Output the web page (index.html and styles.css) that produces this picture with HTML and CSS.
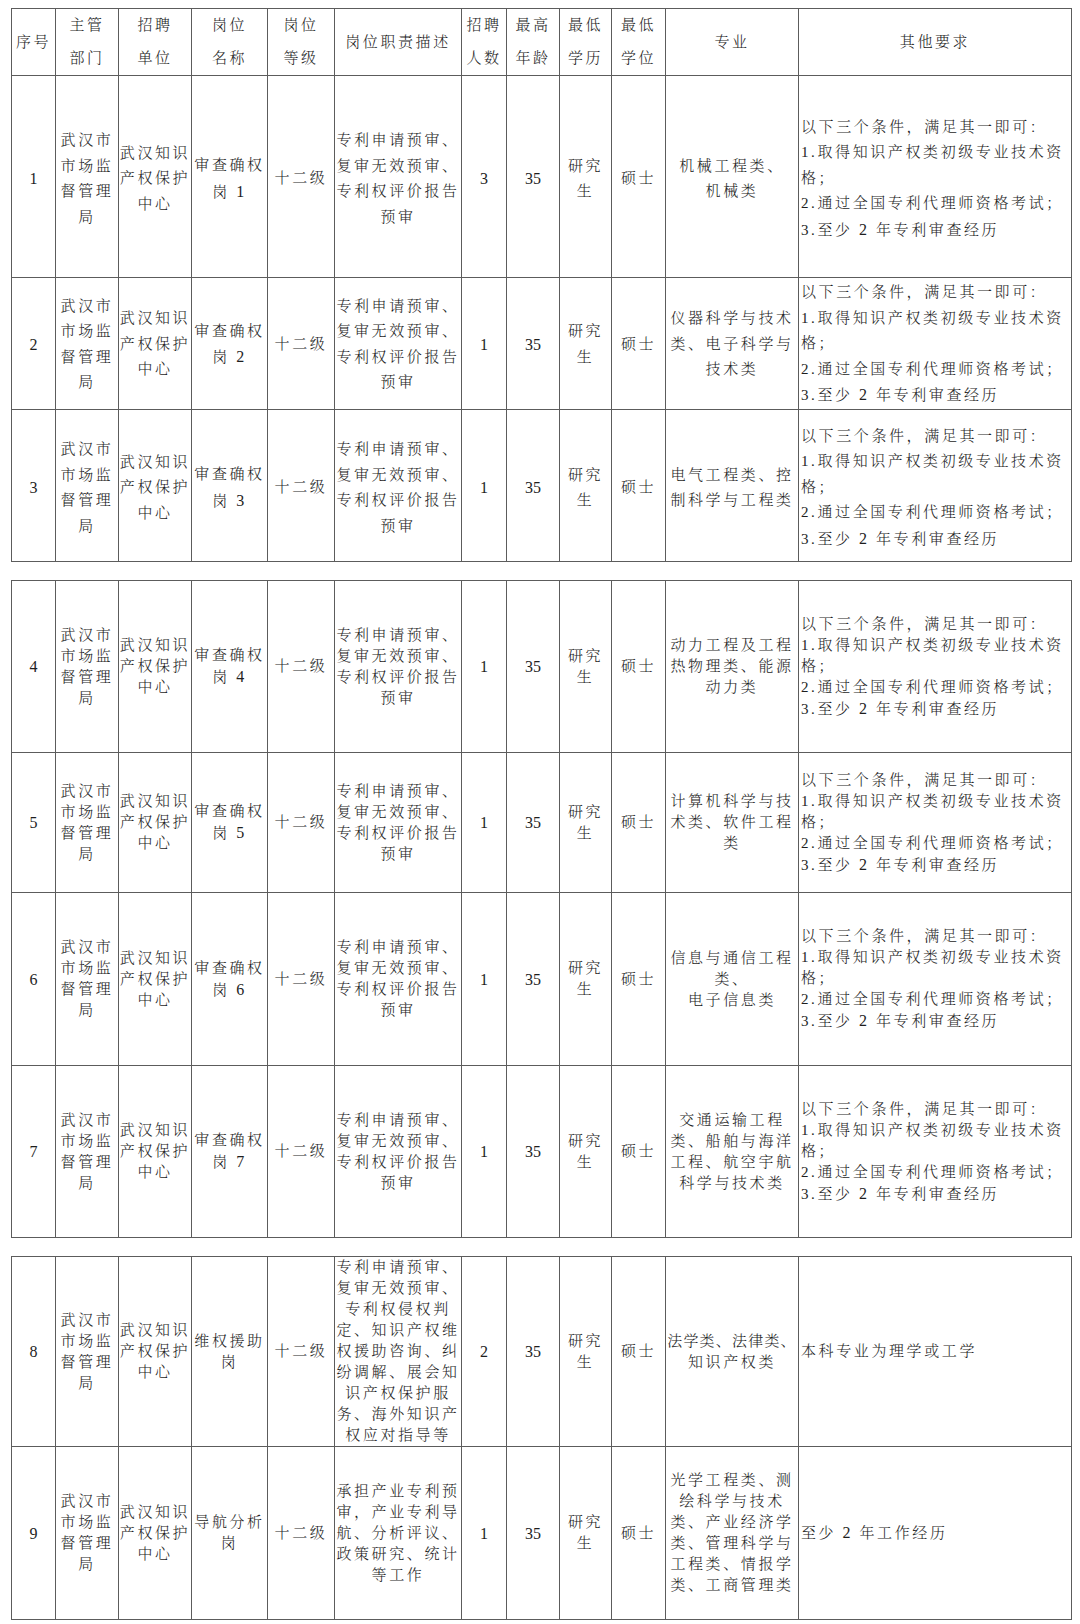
FILE: index.html
```html
<!DOCTYPE html>
<html lang="zh-CN">
<head>
<meta charset="utf-8">
<title>招聘岗位表</title>
<link rel="stylesheet" href="styles.css">
</head>
<body>
<div class="page">
<table class="grid t1">
<colgroup><col class="c1"><col class="c2"><col class="c3"><col class="c4"><col class="c5"><col class="c6"><col class="c7"><col class="c8"><col class="c9"><col class="c10"><col class="c11"><col class="c12"></colgroup>
<thead>
<tr class="hd">
<th>序号</th><th>主管<br>部门</th><th>招聘<br>单位</th><th>岗位<br>名称</th><th>岗位<br>等级</th><th>岗位职责描述</th><th>招聘<br>人数</th><th>最高<br>年龄</th><th>最低<br>学历</th><th>最低<br>学位</th><th>专业</th><th>其他要求</th>
</tr>
</thead>
<tbody>
<tr class="r1">
<td class="num">1</td><td>武汉市<br>市场监<br>督管理<br>局</td><td>武汉知识<br>产权保护<br>中心</td><td>审查确权<br>岗 <span class="d">1</span></td><td>十二级</td><td>专利申请预审、<br>复审无效预审、<br>专利权评价报告<br>预审</td><td class="num">3</td><td class="num">35</td><td>研究<br>生</td><td>硕士</td><td>机械工程类、<br>机械类</td><td class="other">以下三个条件，满足其一即可：<br>1.取得知识产权类初级专业技术资<br>格；<br>2.通过全国专利代理师资格考试；<br>3.至少 <span class="d">2</span> 年专利审查经历</td>
</tr>
<tr class="r2">
<td class="num">2</td><td>武汉市<br>市场监<br>督管理<br>局</td><td>武汉知识<br>产权保护<br>中心</td><td>审查确权<br>岗 <span class="d">2</span></td><td>十二级</td><td>专利申请预审、<br>复审无效预审、<br>专利权评价报告<br>预审</td><td class="num">1</td><td class="num">35</td><td>研究<br>生</td><td>硕士</td><td>仪器科学与技术<br>类、电子科学与<br>技术类</td><td class="other">以下三个条件，满足其一即可：<br>1.取得知识产权类初级专业技术资<br>格；<br>2.通过全国专利代理师资格考试；<br>3.至少 <span class="d">2</span> 年专利审查经历</td>
</tr>
<tr class="r3">
<td class="num">3</td><td>武汉市<br>市场监<br>督管理<br>局</td><td>武汉知识<br>产权保护<br>中心</td><td>审查确权<br>岗 <span class="d">3</span></td><td>十二级</td><td>专利申请预审、<br>复审无效预审、<br>专利权评价报告<br>预审</td><td class="num">1</td><td class="num">35</td><td>研究<br>生</td><td>硕士</td><td>电气工程类、控<br>制科学与工程类</td><td class="other">以下三个条件，满足其一即可：<br>1.取得知识产权类初级专业技术资<br>格；<br>2.通过全国专利代理师资格考试；<br>3.至少 <span class="d">2</span> 年专利审查经历</td>
</tr>
</tbody>
</table>

<table class="grid t2">
<colgroup><col class="c1"><col class="c2"><col class="c3"><col class="c4"><col class="c5"><col class="c6"><col class="c7"><col class="c8"><col class="c9"><col class="c10"><col class="c11"><col class="c12"></colgroup>
<tbody>
<tr class="r4">
<td class="num">4</td><td>武汉市<br>市场监<br>督管理<br>局</td><td>武汉知识<br>产权保护<br>中心</td><td>审查确权<br>岗 <span class="d">4</span></td><td>十二级</td><td>专利申请预审、<br>复审无效预审、<br>专利权评价报告<br>预审</td><td class="num">1</td><td class="num">35</td><td>研究<br>生</td><td>硕士</td><td>动力工程及工程<br>热物理类、能源<br>动力类</td><td class="other">以下三个条件，满足其一即可：<br>1.取得知识产权类初级专业技术资<br>格；<br>2.通过全国专利代理师资格考试；<br>3.至少 <span class="d">2</span> 年专利审查经历</td>
</tr>
<tr class="r5">
<td class="num">5</td><td>武汉市<br>市场监<br>督管理<br>局</td><td>武汉知识<br>产权保护<br>中心</td><td>审查确权<br>岗 <span class="d">5</span></td><td>十二级</td><td>专利申请预审、<br>复审无效预审、<br>专利权评价报告<br>预审</td><td class="num">1</td><td class="num">35</td><td>研究<br>生</td><td>硕士</td><td>计算机科学与技<br>术类、软件工程<br>类</td><td class="other">以下三个条件，满足其一即可：<br>1.取得知识产权类初级专业技术资<br>格；<br>2.通过全国专利代理师资格考试；<br>3.至少 <span class="d">2</span> 年专利审查经历</td>
</tr>
<tr class="r6">
<td class="num">6</td><td>武汉市<br>市场监<br>督管理<br>局</td><td>武汉知识<br>产权保护<br>中心</td><td>审查确权<br>岗 <span class="d">6</span></td><td>十二级</td><td>专利申请预审、<br>复审无效预审、<br>专利权评价报告<br>预审</td><td class="num">1</td><td class="num">35</td><td>研究<br>生</td><td>硕士</td><td>信息与通信工程<br>类、<br>电子信息类</td><td class="other">以下三个条件，满足其一即可：<br>1.取得知识产权类初级专业技术资<br>格；<br>2.通过全国专利代理师资格考试；<br>3.至少 <span class="d">2</span> 年专利审查经历</td>
</tr>
<tr class="r7">
<td class="num">7</td><td>武汉市<br>市场监<br>督管理<br>局</td><td>武汉知识<br>产权保护<br>中心</td><td>审查确权<br>岗 <span class="d">7</span></td><td>十二级</td><td>专利申请预审、<br>复审无效预审、<br>专利权评价报告<br>预审</td><td class="num">1</td><td class="num">35</td><td>研究<br>生</td><td>硕士</td><td>交通运输工程<br>类、船舶与海洋<br>工程、航空宇航<br>科学与技术类</td><td class="other">以下三个条件，满足其一即可：<br>1.取得知识产权类初级专业技术资<br>格；<br>2.通过全国专利代理师资格考试；<br>3.至少 <span class="d">2</span> 年专利审查经历</td>
</tr>
</tbody>
</table>

<table class="grid t3">
<colgroup><col class="c1"><col class="c2"><col class="c3"><col class="c4"><col class="c5"><col class="c6"><col class="c7"><col class="c8"><col class="c9"><col class="c10"><col class="c11"><col class="c12"></colgroup>
<tbody>
<tr class="r8">
<td class="num">8</td><td>武汉市<br>市场监<br>督管理<br>局</td><td>武汉知识<br>产权保护<br>中心</td><td>维权援助<br>岗</td><td>十二级</td><td>专利申请预审、<br>复审无效预审、<br>专利权侵权判<br>定、知识产权维<br>权援助咨询、纠<br>纷调解、展会知<br>识产权保护服<br>务、海外知识产<br>权应对指导等</td><td class="num">2</td><td class="num">35</td><td>研究<br>生</td><td>硕士</td><td><span class="tight">法学类、法律类、</span><br>知识产权类</td><td class="other">本科专业为理学或工学</td>
</tr>
<tr class="r9">
<td class="num">9</td><td>武汉市<br>市场监<br>督管理<br>局</td><td>武汉知识<br>产权保护<br>中心</td><td>导航分析<br>岗</td><td>十二级</td><td>承担产业专利预<br>审，产业专利导<br>航、分析评议、<br>政策研究、统计<br>等工作</td><td class="num">1</td><td class="num">35</td><td>研究<br>生</td><td>硕士</td><td>光学工程类、测<br>绘科学与技术<br>类、产业经济学<br>类、管理科学与<br>工程类、情报学<br>类、工商管理类</td><td class="other">至少 <span class="d">2</span> 年工作经历</td>
</tr>
</tbody>
</table>
</div>
</body>
</html>
```

FILE: styles.css
```css
html, body {
  margin: 0;
  padding: 0;
  background: #ffffff;
}

.page {
  padding: 8px 0 0 11px;
}

.grid {
  border-collapse: collapse;
  table-layout: fixed;
  width: 1061px;
  font-family: "Liberation Serif", "Noto Serif CJK SC", "Noto Sans CJK SC", serif;
  font-size: 15px;
  font-weight: 300;
  color: #1e1e1e;
  letter-spacing: 2.6px;
}

.grid + .grid {
  margin-top: 18px;
}

.grid th,
.grid td {
  border: 1px solid #5c5c5c;
  padding: 0;
  text-align: center;
  vertical-align: middle;
  white-space: nowrap;
  font-weight: 300;
  overflow: visible;
}

.c1 { width: 44px; }
.c2 { width: 63px; }
.c3 { width: 73px; }
.c4 { width: 76px; }
.c5 { width: 67px; }
.c6 { width: 127px; }
.c7 { width: 45px; }
.c8 { width: 53px; }
.c9 { width: 52px; }
.c10 { width: 54px; }
.c11 { width: 133px; }
.c12 { width: 273px; }

.hd { height: 67px; }
.hd th { line-height: 32.6px; }

.t1 td {
  line-height: 25.5px;
  padding-top: 5px;
}
.t1 .r2 td {
  padding-top: 2px;
}
.t2 td,
.t3 td { line-height: 21px; }

.r1 { height: 202px; }
.r2 { height: 132px; }
.r3 { height: 152px; }
.r4 { height: 172px; }
.r5 { height: 140px; }
.r6 { height: 173px; }
.r7 { height: 172px; }
.r8 { height: 190px; }
.r9 { height: 173px; }

.grid td.num {
  font-size: 16px;
  letter-spacing: 0;
}

.grid td.other {
  text-align: left;
  padding-left: 2px;
}

.d {
  font-size: 16px;
  font-weight: 400;
}

.tight {
  letter-spacing: 1.2px;
}
```
